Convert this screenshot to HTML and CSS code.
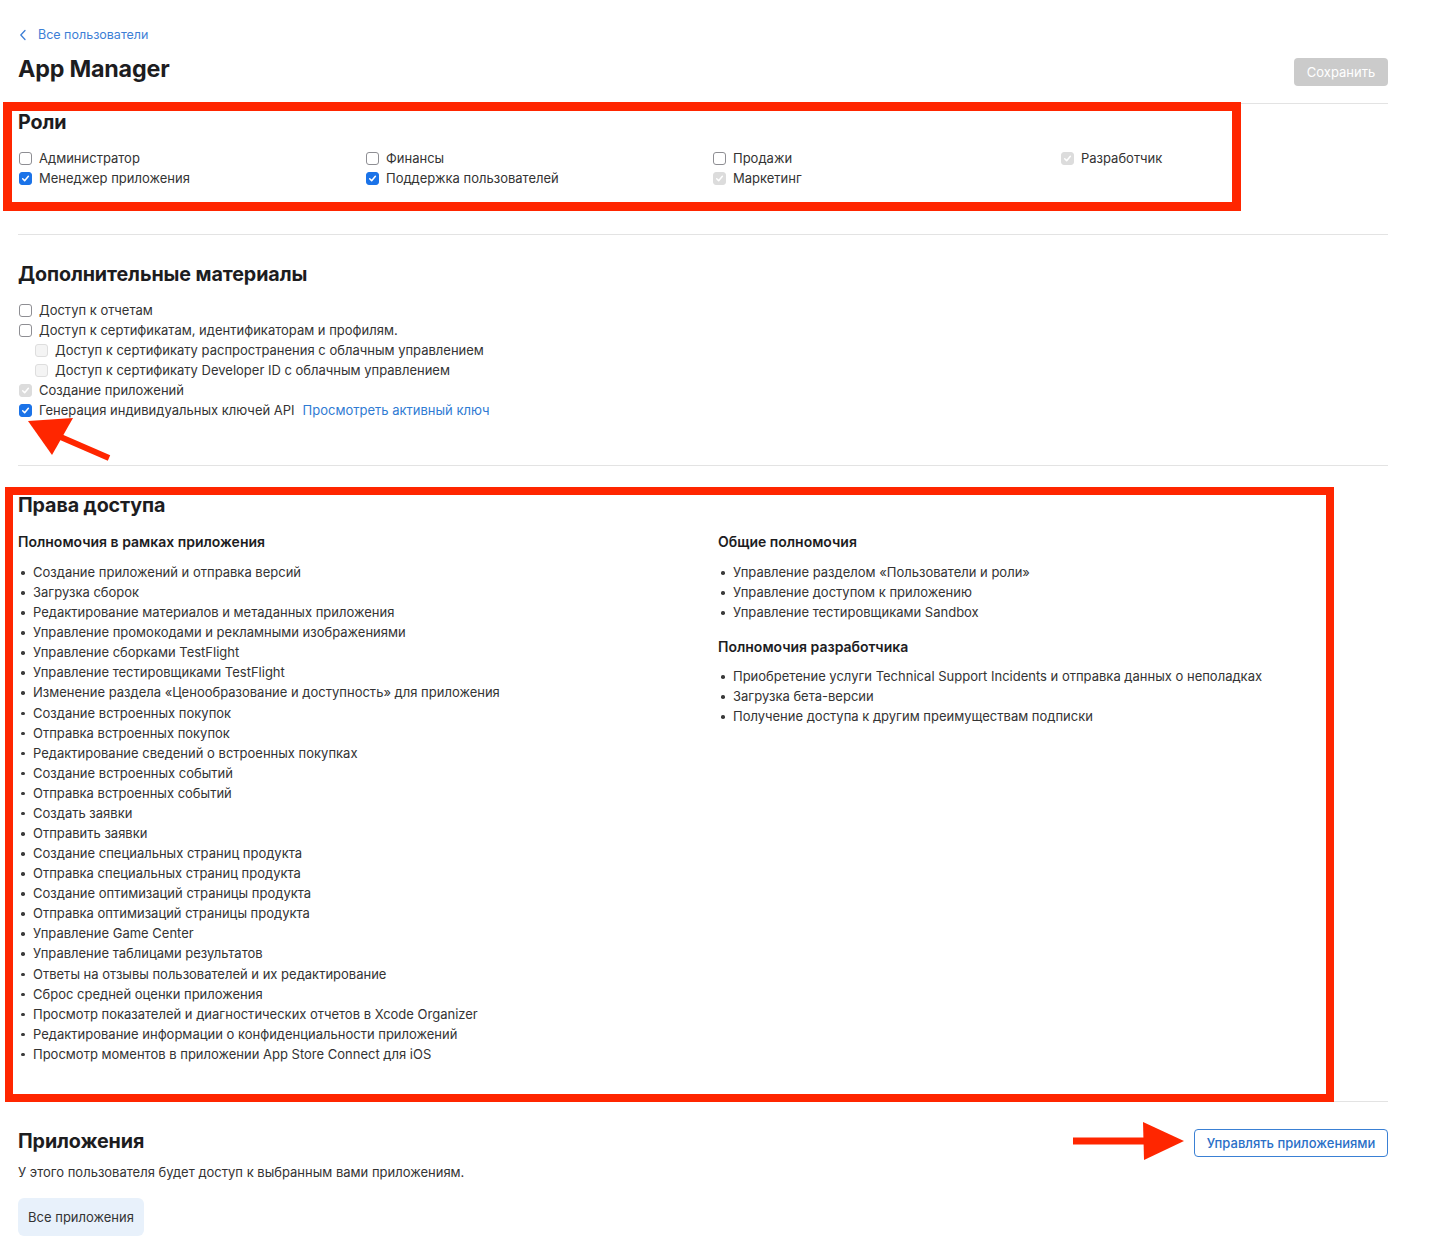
FILE: index.html
```html
<!DOCTYPE html>
<html lang="ru">
<head>
<meta charset="utf-8">
<title>App Manager</title>
<link rel="stylesheet" href="styles.css">
</head>
<body>
<div class="page">
  <a class="back" href="#">
    <svg class="back-chev" width="8" height="12" viewBox="0 0 8 12"><path d="M6 1.5 L1.8 6 L6 10.5" fill="none" stroke="#3d7fd6" stroke-width="1.3" stroke-linecap="round" stroke-linejoin="round"/></svg>
    <span>Все пользователи</span>
  </a>
  <div class="header">
    <h1>App Manager</h1>
    <button class="save">Сохранить</button>
  </div>

  <section class="section roles">
    <h2>Роли</h2>
    <div class="roles-grid">
      <div class="col">
        <label class="item"><span class="cb"></span>Администратор</label>
        <label class="item"><span class="cb checked"><svg viewBox="0 0 13 13"><path d="M3.2 6.8 L5.5 9.1 L9.9 3.8"/></svg></span>Менеджер приложения</label>
      </div>
      <div class="col">
        <label class="item"><span class="cb"></span>Финансы</label>
        <label class="item"><span class="cb checked"><svg viewBox="0 0 13 13"><path d="M3.2 6.8 L5.5 9.1 L9.9 3.8"/></svg></span>Поддержка пользователей</label>
      </div>
      <div class="col">
        <label class="item"><span class="cb"></span>Продажи</label>
        <label class="item"><span class="cb dis-checked"><svg viewBox="0 0 13 13"><path d="M3.2 6.8 L5.5 9.1 L9.9 3.8"/></svg></span>Маркетинг</label>
      </div>
      <div class="col">
        <label class="item"><span class="cb dis-checked"><svg viewBox="0 0 13 13"><path d="M3.2 6.8 L5.5 9.1 L9.9 3.8"/></svg></span>Разработчик</label>
      </div>
    </div>
  </section>

  <section class="section extra">
    <h2>Дополнительные материалы</h2>
    <div class="extra-list">
      <label class="item"><span class="cb"></span>Доступ к отчетам</label>
      <label class="item"><span class="cb"></span>Доступ к сертификатам, идентификаторам и профилям.</label>
      <label class="item sub"><span class="cb disabled"></span>Доступ к сертификату распространения с облачным управлением</label>
      <label class="item sub"><span class="cb disabled"></span>Доступ к сертификату Developer ID с облачным управлением</label>
      <label class="item"><span class="cb dis-checked"><svg viewBox="0 0 13 13"><path d="M3.2 6.8 L5.5 9.1 L9.9 3.8"/></svg></span>Создание приложений</label>
      <label class="item"><span class="cb checked"><svg viewBox="0 0 13 13"><path d="M3.2 6.8 L5.5 9.1 L9.9 3.8"/></svg></span>Генерация индивидуальных ключей API<a class="link" href="#">Просмотреть активный ключ</a></label>
    </div>
  </section>

  <section class="section perms">
    <h2>Права доступа</h2>
    <div class="perm-grid">
      <div class="perm-col">
        <h3>Полномочия в рамках приложения</h3>
        <ul class="bullets">
          <li>Создание приложений и отправка версий</li>
          <li>Загрузка сборок</li>
          <li>Редактирование материалов и метаданных приложения</li>
          <li>Управление промокодами и рекламными изображениями</li>
          <li>Управление сборками TestFlight</li>
          <li>Управление тестировщиками TestFlight</li>
          <li>Изменение раздела «Ценообразование и доступность» для приложения</li>
          <li>Создание встроенных покупок</li>
          <li>Отправка встроенных покупок</li>
          <li>Редактирование сведений о встроенных покупках</li>
          <li>Создание встроенных событий</li>
          <li>Отправка встроенных событий</li>
          <li>Создать заявки</li>
          <li>Отправить заявки</li>
          <li>Создание специальных страниц продукта</li>
          <li>Отправка специальных страниц продукта</li>
          <li>Создание оптимизаций страницы продукта</li>
          <li>Отправка оптимизаций страницы продукта</li>
          <li>Управление Game Center</li>
          <li>Управление таблицами результатов</li>
          <li>Ответы на отзывы пользователей и их редактирование</li>
          <li>Сброс средней оценки приложения</li>
          <li>Просмотр показателей и диагностических отчетов в Xcode Organizer</li>
          <li>Редактирование информации о конфиденциальности приложений</li>
          <li>Просмотр моментов в приложении App Store Connect для iOS</li>
        </ul>
      </div>
      <div class="perm-col">
        <h3>Общие полномочия</h3>
        <ul class="bullets">
          <li>Управление разделом «Пользователи и роли»</li>
          <li>Управление доступом к приложению</li>
          <li>Управление тестировщиками Sandbox</li>
        </ul>
        <h3 class="h3-next">Полномочия разработчика</h3>
        <ul class="bullets bullets-tight">
          <li>Приобретение услуги Technical Support Incidents и отправка данных о неполадках</li>
          <li>Загрузка бета-версии</li>
          <li>Получение доступа к другим преимуществам подписки</li>
        </ul>
      </div>
    </div>
  </section>

  <section class="section apps">
    <div class="apps-main">
      <h2>Приложения</h2>
      <p class="apps-text">У этого пользователя будет доступ к выбранным вами приложениям.</p>
      <button class="all-apps">Все приложения</button>
    </div>
    <button class="manage">Управлять приложениями</button>
  </section>
</div>

<svg class="annot" width="1440" height="1257" viewBox="0 0 1440 1257">
  <rect x="7.5" y="106.5" width="1229" height="100" fill="none" stroke="#ff2600" stroke-width="9"/>
  <rect x="9" y="491" width="1321" height="607" fill="none" stroke="#ff2600" stroke-width="8"/>
  <line x1="56" y1="435" x2="109" y2="458" stroke="#ff2600" stroke-width="6"/>
  <polygon points="28,421 73,418 52,455" fill="#ff2600"/>
  <line x1="1073" y1="1141" x2="1150" y2="1141" stroke="#ff2600" stroke-width="7"/>
  <polygon points="1143,1122 1184,1141 1144,1160" fill="#ff2600"/>
</svg>
</body>
</html>
```

FILE: styles.css
```css
* { box-sizing: border-box; }

html, body {
  margin: 0;
  padding: 0;
  background: #ffffff;
}

body {
  font-family: Inter, "Noto Sans", "Liberation Sans", sans-serif;
  color: #333333;
  font-size: 13px;
  position: relative;
  width: 1440px;
  min-height: 1257px;
}

.page {
  padding: 25px 52px 0 18px;
}

.back {
  display: flex;
  align-items: center;
  height: 20px;
  line-height: 20px;
  color: #3d7fd6;
  text-decoration: none;
  font-size: 12.5px;
}

.back-chev {
  margin-right: 11px;
  margin-left: 1px;
}

.header {
  margin-top: 9px;
  display: flex;
  justify-content: space-between;
  align-items: flex-start;
}

h1 {
  margin: 0;
  font-size: 23.3px;
  line-height: 30px;
  font-weight: 700;
  color: #1d1d1f;
  letter-spacing: -0.2px;
}

.save {
  margin-top: 4px;
  height: 28px;
  width: 94px;
  border: none;
  border-radius: 4px;
  background: #cbcbcb;
  color: #ffffff;
  font-family: inherit;
  font-size: 13px;
  padding: 0;
}

.section {
  border-top: 1px solid #e3e3e3;
}

h2 {
  margin: 0;
  font-size: 19.7px;
  line-height: 24px;
  font-weight: 700;
  color: #1d1d1f;
  letter-spacing: -0.1px;
}

.roles {
  margin-top: 17px;
  padding-top: 6px;
  padding-bottom: 46px;
}

.roles-grid {
  margin-top: 14px;
  display: grid;
  grid-template-columns: 347px 347px 348px auto;
}

.item {
  display: flex;
  align-items: center;
  height: 20px;
  line-height: 20px;
  white-space: nowrap;
}

.item.sub {
  padding-left: 16px;
}

.cb {
  flex: none;
  width: 13px;
  height: 13px;
  margin-left: 1px;
  margin-right: 7px;
  border: 1px solid #8e8e93;
  border-radius: 3px;
  background: #ffffff;
  display: flex;
  align-items: center;
  justify-content: center;
}

.cb svg {
  width: 13px;
  height: 13px;
}

.cb svg path {
  fill: none;
  stroke: #ffffff;
  stroke-width: 1.8;
  stroke-linecap: round;
  stroke-linejoin: round;
}

.cb.checked {
  background: #1b73e8;
  border-color: #1b73e8;
}

.cb.dis-checked {
  background: #dcdcdc;
  border-color: #dcdcdc;
}

.cb.disabled {
  background: #f4f4f4;
  border-color: #dedede;
}

.extra {
  padding-top: 27px;
  padding-bottom: 45px;
}

.extra-list {
  margin-top: 14px;
}

.link {
  margin-left: 8px;
  color: #2f7bd3;
  text-decoration: none;
}

.perms {
  padding-top: 27px;
  padding-bottom: 37px;
}

.perm-grid {
  margin-top: 15px;
  display: grid;
  grid-template-columns: 700px auto;
}

h3 {
  margin: 0;
  font-size: 14px;
  line-height: 20px;
  font-weight: 600;
  color: #1d1d1f;
}

.h3-next {
  margin-top: 15px;
}

.bullets {
  list-style: none;
  margin: 10px 0 0 0;
  padding: 0;
}

.bullets-tight {
  margin-top: 9px;
}

.bullets li {
  position: relative;
  height: 20.08px;
  line-height: 20px;
  padding-left: 15px;
  white-space: nowrap;
}

.bullets li::before {
  content: "";
  position: absolute;
  left: 3px;
  top: 9px;
  width: 3.5px;
  height: 3.5px;
  border-radius: 50%;
  background: #3a3a3a;
}

.apps {
  padding-top: 27px;
  display: flex;
  justify-content: space-between;
  align-items: flex-start;
}

.apps-text {
  margin: 9px 0 0 0;
  line-height: 20px;
}

.all-apps {
  margin-top: 16px;
  height: 38px;
  width: 126px;
  border: none;
  border-radius: 6px;
  background: #e8f1fb;
  color: #333333;
  font-family: inherit;
  font-size: 13px;
  padding: 0;
}

.manage {
  height: 28px;
  width: 194px;
  border: 1px solid #3a80d4;
  border-radius: 4px;
  background: #ffffff;
  color: #2a6fc7;
  font-family: inherit;
  font-size: 13px;
  font-weight: 500;
  padding: 0;
}

.annot {
  position: absolute;
  left: 0;
  top: 0;
  pointer-events: none;
}
```
